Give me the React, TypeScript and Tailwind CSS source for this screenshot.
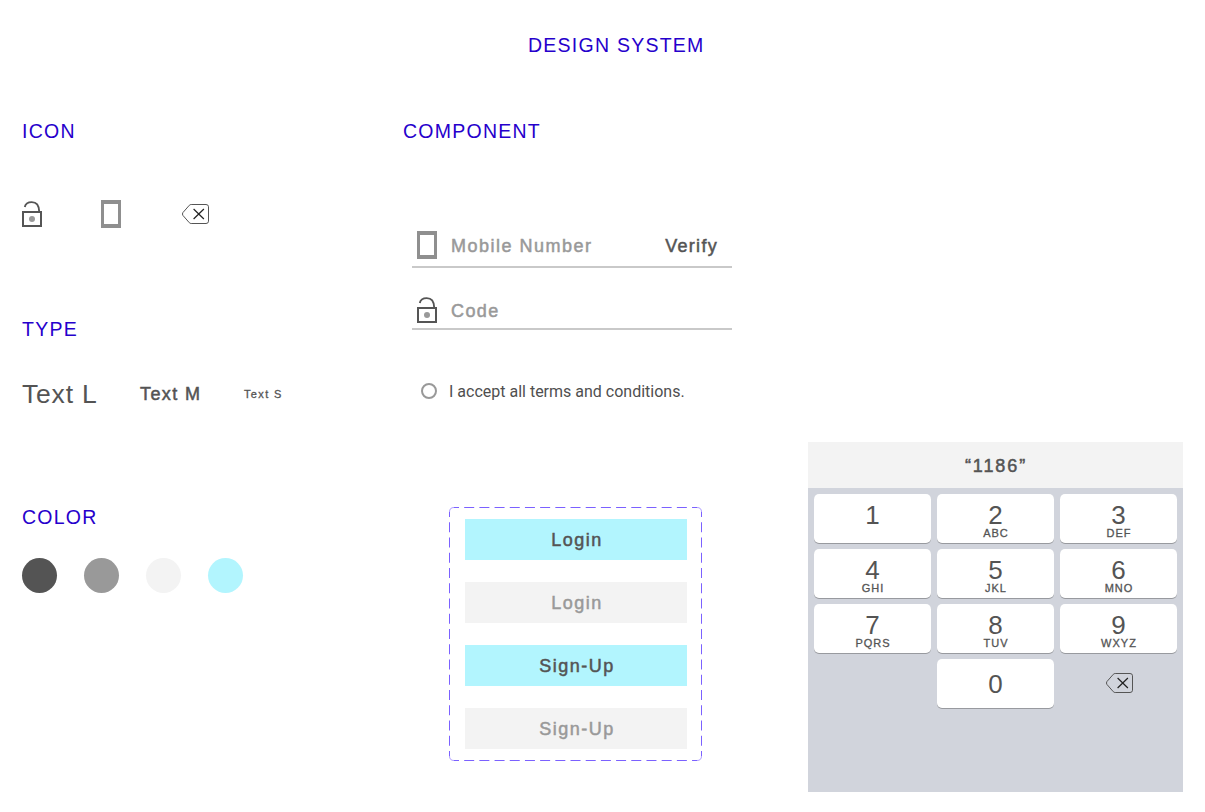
import React from "react";

const FONT = "font-['Liberation_Sans',Arial,sans-serif]";

function Heading({ children, className = "" }: { children: React.ReactNode; className?: string }) {
  return (
    <h2 className={`h-6 text-[19.5px] leading-6 tracking-[1.25px] whitespace-nowrap text-[#2600cc] ${className}`}>
      {children}
    </h2>
  );
}

function LockIcon() {
  return (
    <svg width="20" height="27" viewBox="0 0 20 27" fill="none" className="shrink-0">
      <path d="M2.8 6C3.4 2.8 6.4 1.1 9.8 1.1C14.2 1.1 17 4.3 17.2 10.5" stroke="#555" strokeWidth="1.9" />
      <rect x="1" y="11" width="18" height="14" stroke="#555" strokeWidth="2" />
      <circle cx="10" cy="18" r="3" fill="#999" />
    </svg>
  );
}

function PhoneIcon() {
  return (
    <svg width="20" height="28" viewBox="0 0 20 28" className="shrink-0">
      <path fillRule="evenodd" fill="#8f8f8f" d="M0 0H20V28H0ZM3 4V24H17V4Z" />
    </svg>
  );
}

function BackspaceIcon() {
  return (
    <svg width="28" height="21" viewBox="0 0 28 21" fill="none" className="shrink-0">
      <path
        d="M9.2 .5H24Q26.5 .5 26.5 2.8V17.2Q26.5 19.5 24 19.5H9.2Q8 19.5 7.3 18.7L.9 11.4Q0 10 .9 8.6L7.3 1.3Q8 .5 9.2 .5Z"
        stroke="#555"
        strokeWidth="1"
      />
      <path d="M11.6 5L21.9 15M21.9 5L11.6 15" stroke="#222" strokeWidth="1.2" />
    </svg>
  );
}

function DashedFrame() {
  return (
    <svg width="253" height="254" className="absolute inset-0" fill="none" stroke="#7b61ff">
      <path d="M5 .5H248M5 253.5H248" strokeDasharray="10 5.19" strokeDashoffset="5" />
      <path d="M.5 5V249M252.5 5V249" strokeDasharray="10 5.25" strokeDashoffset="5" />
      <path
        d="M.5 5Q.5 .5 5 .5M248 .5Q252.5 .5 252.5 5M252.5 249Q252.5 253.5 248 253.5M5 253.5Q.5 253.5 .5 249"
        strokeOpacity=".6"
      />
    </svg>
  );
}

const medium = "text-[18px] leading-6 whitespace-nowrap [-webkit-text-stroke:0.5px_currentColor]";

const swatches = ["bg-[#545454]", "bg-[#999999]", "bg-[#f3f3f3]", "bg-[#b2f5fe]"];

const buttons = [
  { label: "Login", active: true },
  { label: "Login", active: false },
  { label: "Sign-Up", active: true },
  { label: "Sign-Up", active: false },
];

const keys = [
  ["1", ""],
  ["2", "ABC"],
  ["3", "DEF"],
  ["4", "GHI"],
  ["5", "JKL"],
  ["6", "MNO"],
  ["7", "PQRS"],
  ["8", "TUV"],
  ["9", "WXYZ"],
];

const keyBox = "flex h-[49px] flex-col items-center rounded-[5px] bg-white shadow-[0_1px_0_#989a9f]";
const digit = "text-[26px] leading-[26px]";

export default function App() {
  return (
    <main className={`h-[812px] w-[1205px] overflow-hidden bg-white text-[#545454] ${FONT}`}>
      <header className="h-[119px] pt-[33px] pl-[528px]">
        <Heading>DESIGN SYSTEM</Heading>
      </header>
      <div className="flex">
        <section className="w-[403px] pl-[22px]">
          <Heading>ICON</Heading>
          <div className="mt-[57px] flex h-7 items-start">
            <div className="w-[79px] pt-px">
              <LockIcon />
            </div>
            <div className="w-[81px]">
              <PhoneIcon />
            </div>
            <div className="pt-1">
              <BackspaceIcon />
            </div>
          </div>
          <Heading className="mt-[89px]">TYPE</Heading>
          <div className="mt-[37px] flex h-8 items-center whitespace-nowrap">
            <p className="w-[118px] text-[26.5px] leading-8 tracking-[0.8px]">Text L</p>
            <p className={`w-[104px] tracking-[1.4px] ${medium}`}>Text M</p>
            <p className="-mt-px text-[11px] leading-4 tracking-[1.35px] [-webkit-text-stroke:0.3px_currentColor]">Text S</p>
          </div>
          <Heading className="mt-[95px]">COLOR</Heading>
          <div className="mt-[29px] flex gap-[27px]">
            {swatches.map((c) => (
              <span key={c} className={`size-[35px] rounded-full ${c}`} />
            ))}
          </div>
        </section>

        <section className="w-[405px]">
          <Heading>COMPONENT</Heading>
          <div className="mt-[88px] ml-[9px] flex h-[37px] w-80 items-start border-b-2 border-[#c9c9c9] pr-[14px] pl-[5px]">
            <PhoneIcon />
            <span className={`mt-[3px] ml-[14px] flex-1 tracking-[1.5px] text-[#999] ${medium}`}>Mobile Number</span>
            <span className={`mt-[3px] tracking-[1.3px] ${medium}`}>Verify</span>
          </div>
          <div className="mt-[29px] ml-[9px] flex h-[33px] w-80 items-start border-b-2 border-[#c9c9c9] pl-[5px]">
            <LockIcon />
            <span className={`mt-[2px] ml-[14px] tracking-[1.4px] text-[#999] ${medium}`}>Code</span>
          </div>
          <label className="mt-[49px] ml-[18px] flex h-6 items-center font-[Roboto,sans-serif] text-[16px] text-[#4f4f4f]">
            <span className="mr-3 size-4 rounded-full border-2 border-[#999]" />
            <span className="pt-[2px] leading-6">I accept all terms and conditions.</span>
          </label>
          <div className="relative mt-[104px] ml-[46px] flex h-[254px] w-[253px] flex-col gap-[22px] pt-3 pl-4">
            <DashedFrame />
            {buttons.map((b, i) => (
              <button
                key={i}
                className={`h-[41px] w-[222px] pl-[2px] tracking-[1.5px] ${medium} ${b.active ? "bg-[#b2f5fe] text-[#545454]" : "bg-[#f3f3f3] text-[#999]"}`}
              >
                {b.label}
              </button>
            ))}
          </div>
        </section>

        <section className="mt-[323px] h-[350px] w-[375px] bg-[#d1d4dc]">
          <div className={`flex h-[46px] items-center justify-center bg-[#f3f3f3] pt-[2px] pl-px tracking-[1.9px] ${medium}`}>
            “1186”
          </div>
          <div className="grid grid-cols-3 gap-1.5 p-1.5">
            {keys.map(([n, letters]) => (
              <div key={n} className={keyBox}>
                <span className={`mt-2 ${digit}`}>{n}</span>
                <span className="pl-px text-[11px] leading-[10px] tracking-[1px] [-webkit-text-stroke:0.3px_currentColor]">
                  {letters}
                </span>
              </div>
            ))}
            <span />
            <div className={keyBox}>
              <span className={`mt-3 ${digit}`}>0</span>
            </div>
            <div className="pt-[14px] pl-[46px]">
              <BackspaceIcon />
            </div>
          </div>
        </section>
      </div>
    </main>
  );
}
